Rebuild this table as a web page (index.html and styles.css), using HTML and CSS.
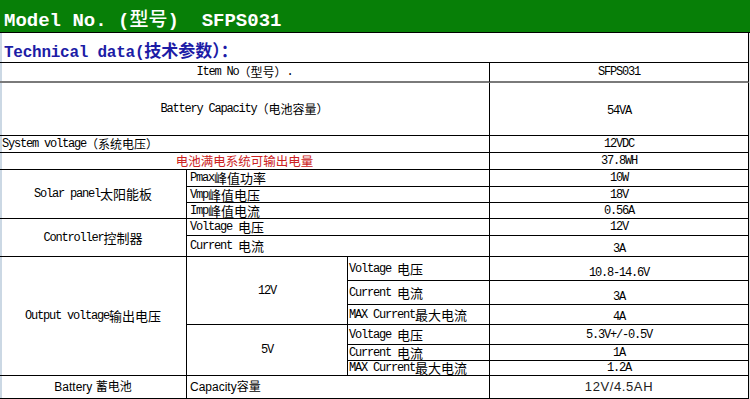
FILE: index.html
```html
<!DOCTYPE html>
<html lang="en">
<head>
<meta charset="utf-8">
<title>SFPS031</title>
<link rel="stylesheet" href="styles.css">
</head>
<body>
<div class="page">
  <header class="title">Model No. (<span class="tzh">型号</span>)  SFPS031</header>
  <div class="subtitle">Technical data(<span class="szh">技术参数）：</span></div>
  <div class="sheet">
    <div class="cell span3 center row-item">Item No<span class="zh">（型号）</span>.</div>
    <div class="cell center row-item">SFPS031</div>

    <div class="cell span3 center">Battery Capacity<span class="zh">（电池容量）</span></div>
    <div class="cell center low2">54VA</div>

    <div class="cell span3 left">System voltage<span class="zh">（系统电压）</span></div>
    <div class="cell center">12VDC</div>

    <div class="cell span3 center red">电池满电系统可输出电量</div>
    <div class="cell center">37.8WH</div>

    <div class="cell rows3 center">Solar panel<span class="zl">太阳能板</span></div>
    <div class="cell span2 label">Pmax<span class="zl">峰值功率</span></div>
    <div class="cell center">10W</div>
    <div class="cell span2 label">Vmp<span class="zl">峰值电压</span></div>
    <div class="cell center">18V</div>
    <div class="cell span2 label">Imp<span class="zl">峰值电流</span></div>
    <div class="cell center">0.56A</div>

    <div class="cell rows2 center">Controller<span class="zl">控制器</span></div>
    <div class="cell span2 label">Voltage <span class="zl">电压</span></div>
    <div class="cell center">12V</div>
    <div class="cell span2 label">Current <span class="zl">电流</span></div>
    <div class="cell center bottom">3A</div>

    <div class="cell rows6 center">Output voltage<span class="zl">输出电压</span></div>
    <div class="cell rows3 center">12V</div>
    <div class="cell label3">Voltage <span class="zl">电压</span></div>
    <div class="cell center bottom">10.8-14.6V</div>
    <div class="cell label3">Current <span class="zl">电流</span></div>
    <div class="cell center bottom">3A</div>
    <div class="cell label3">MAX Current<span class="zl">最大电流</span></div>
    <div class="cell center bottom">4A</div>
    <div class="cell rows3 center">5V</div>
    <div class="cell label3">Voltage <span class="zl">电压</span></div>
    <div class="cell center">5.3V+/-0.5V</div>
    <div class="cell label3">Current <span class="zl">电流</span></div>
    <div class="cell center">1A</div>
    <div class="cell label3">MAX Current<span class="zl">最大电流</span></div>
    <div class="cell center">1.2A</div>

    <div class="cell center sans">Battery 蓄电池</div>
    <div class="cell span2 label sans">Capacity容量</div>
    <div class="cell center sans wide">12V/4.5AH</div>
  </div>
</div>
</body>
</html>
```
FILE: styles.css
```css
html, body {
  margin: 0;
  padding: 0;
  background: #ffffff;
}

.page {
  width: 750px;
  height: 399px;
  overflow: hidden;
  background: #e4e4e4;
}

.title {
  box-sizing: border-box;
  height: 33px;
  background: #077f07;
  border-bottom: 1px solid #000;
  color: #ffffff;
  font: bold 19px/28px "Liberation Mono", "Noto Sans CJK SC", monospace;
  padding: 4px 0 0 4px;
  white-space: pre;
}

.tzh {
  font-family: "Noto Sans CJK SC", sans-serif;
  font-weight: 500;
}

.subtitle {
  box-sizing: border-box;
  width: 749px;
  height: 30px;
  background: #fff;
  border-bottom: 1px solid #000;
  border-right: 1px solid #000;
  box-shadow: inset 2px 0 #cbd8e4;
  color: #1c1ca6;
  font: bold 16px/20px "Liberation Mono", "Noto Sans CJK SC", monospace;
  letter-spacing: -0.25px;
  padding: 7px 0 0 4px;
  white-space: pre;
}

.szh {
  letter-spacing: 0;
  font-family: "Noto Sans CJK SC", sans-serif;
  font-size: 17px;
  line-height: 20px;
  font-weight: 700;
}

.sheet {
  width: 749px;
  display: grid;
  grid-template-columns: 187px 161px 142px 259px;
  grid-template-rows: 20px 53px 17px 17px 17px 16px 16px 17px 21px 24px 24px 20px 20px 16px 15px 23px;
  background: #fff;
  box-shadow: inset 2px 0 #cbd8e4;
}

.cell {
  box-sizing: border-box;
  border-right: 1px solid #000;
  border-bottom: 1px solid #000;
  display: flex;
  align-items: center;
  white-space: pre;
  color: #000;
  font: 12px/12px "Liberation Mono", "Noto Sans CJK SC", monospace;
  letter-spacing: -1.2px;
}

.row-item {
  border-bottom: 2px solid #7a7a7a;
}

.span3 { grid-column: span 3; }
.span2 { grid-column: span 2; }
.rows2 { grid-row: span 2; }
.rows3 { grid-row: span 3; }
.rows6 { grid-row: span 6; }

.center { justify-content: center; }
.left { justify-content: flex-start; padding-left: 2px; }
.label { justify-content: flex-start; padding-left: 3px; }
.label3 { justify-content: flex-start; padding-left: 1px; }

.bottom {
  align-items: flex-end;
  padding-bottom: 1px;
}

.low2 { padding-top: 3px; }

.zh {
  font-family: "Noto Sans CJK SC", sans-serif;
  font-size: 12px;
  line-height: 12px;
  letter-spacing: 0;
}

.zl {
  font-family: "Noto Sans CJK SC", sans-serif;
  font-size: 13px;
  line-height: 12px;
  letter-spacing: 0;
}

.red {
  color: #cc2222;
  font-family: "Noto Sans CJK SC", sans-serif;
  font-size: 12.5px;
  line-height: 14px;
  letter-spacing: 0;
}

.sans {
  font: 12px/14px "Liberation Sans", "Noto Sans CJK SC", sans-serif;
  letter-spacing: 0;
}

.wide {
  font-size: 13px;
  letter-spacing: 0.6px;
  color: #222;
}
```
